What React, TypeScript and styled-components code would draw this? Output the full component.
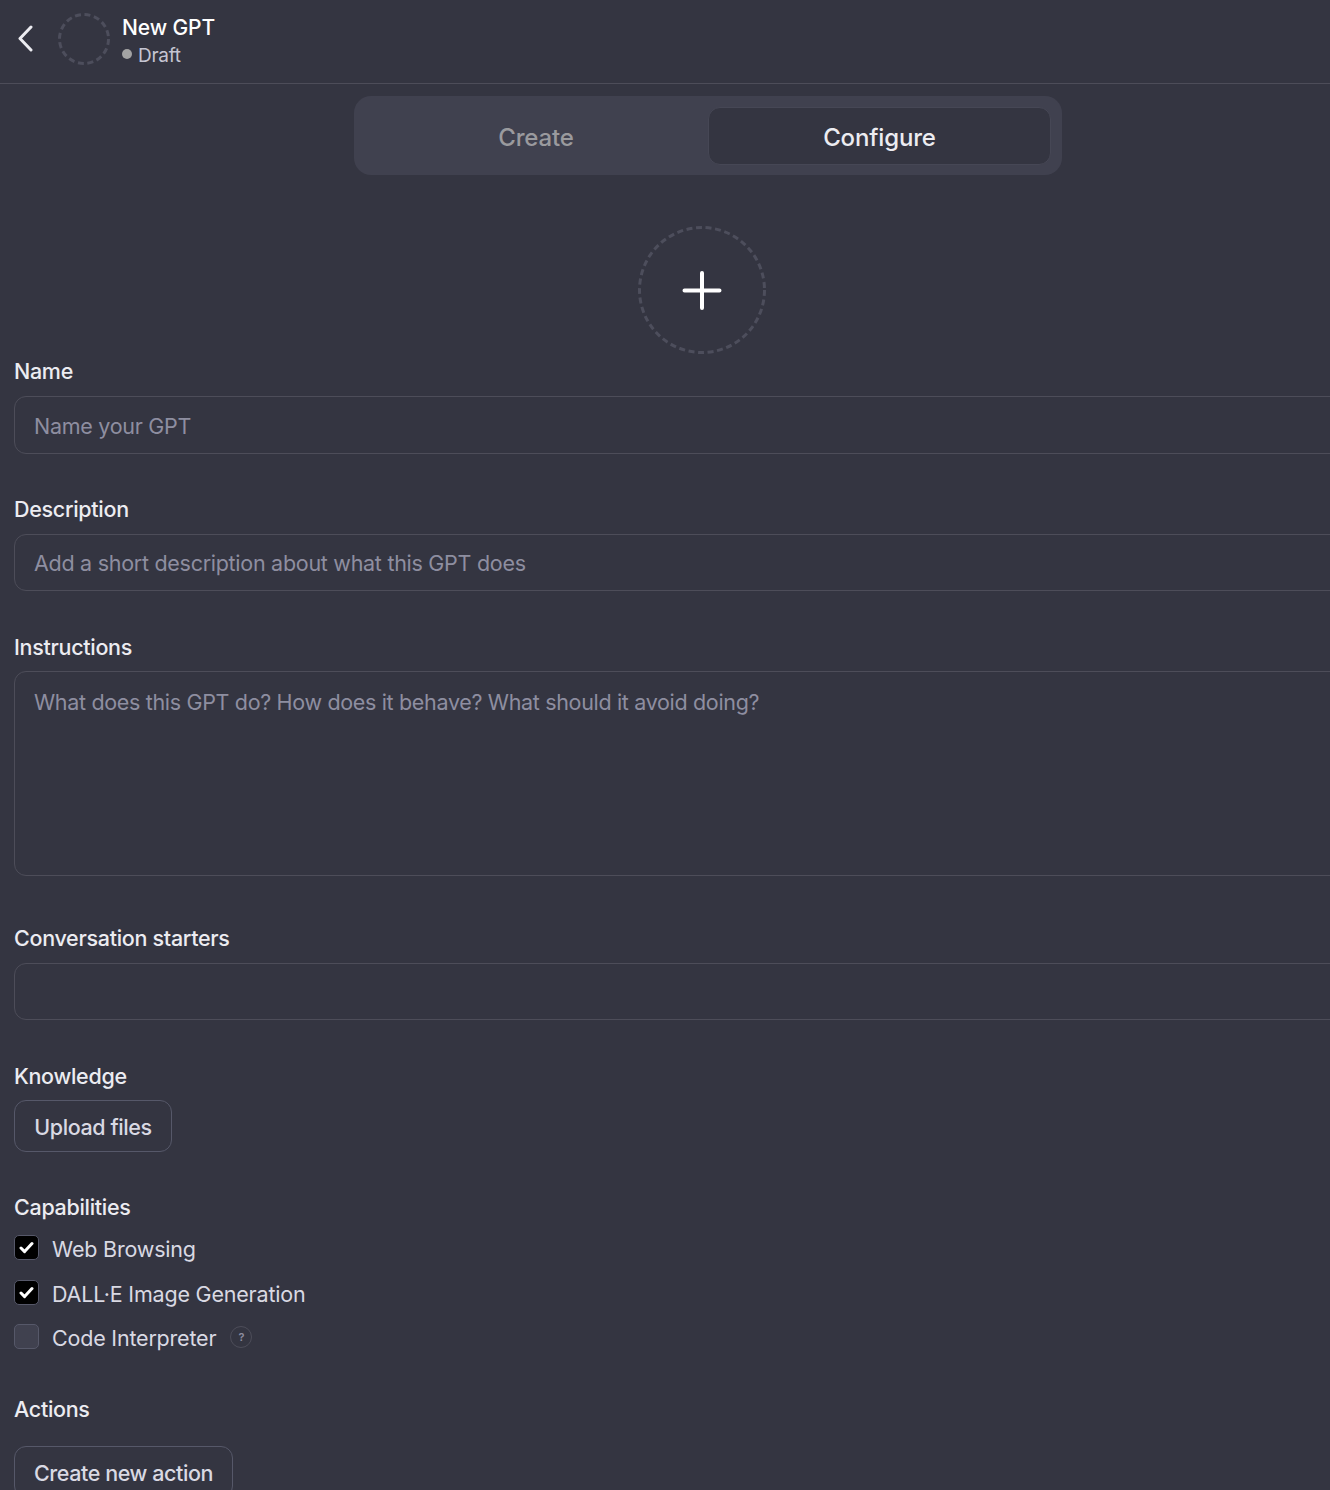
import React from "react";
import styled, { createGlobalStyle } from "styled-components";

const GlobalStyle = createGlobalStyle`
  html, body {
    margin: 0;
    padding: 0;
    width: 1330px;
    height: 1490px;
    overflow: hidden;
    background: #343541;
  }
  * { box-sizing: border-box; }
`;

const Page = styled.div`
  width: 1416px;
  height: 1490px;
  overflow: hidden;
  background: #343541;
  color: #ececf1;
  font-family: Inter, "Liberation Sans", sans-serif;
`;

const Header = styled.header`
  width: 1330px;
  height: 84px;
  display: flex;
  align-items: center;
  padding: 0 0 6px 14px;
  border-bottom: 1px solid #4d4d59;
`;

const BackButton = styled.button`
  width: 24px;
  height: 32px;
  padding: 0;
  margin-right: 20px;
  display: flex;
  align-items: center;
  justify-content: center;
  background: none;
  border: 0;
  color: #ececf1;
`;

const SmallAvatar = styled.svg`
  width: 52px;
  height: 52px;
  margin-right: 12px;
  flex: none;
`;

const HeaderText = styled.div`
  display: flex;
  flex-direction: column;
  margin-top: 6px;
`;

const Title = styled.div`
  font-size: 21px;
  line-height: 28px;
  font-weight: 500;
  letter-spacing: -0.1px;
  color: #fff;
`;

const Status = styled.div`
  display: flex;
  align-items: center;
  gap: 6px;
  font-size: 19px;
  line-height: 28px;
  letter-spacing: -0.3px;
  color: #c5c5d2;
`;

const Dot = styled.span`
  width: 10px;
  height: 10px;
  margin-top: -3px;
  border-radius: 50%;
  background: #a3a3a3;
`;

const Tabs = styled.div`
  width: 708px;
  height: 79px;
  margin: 12px auto 0;
  padding: 11px 11px 10px 0;
  display: grid;
  grid-template-columns: 354px 343px;
  background: #40414f;
  border-radius: 17px;
`;

const Tab = styled.div<{ $active?: boolean }>`
  display: flex;
  align-items: center;
  justify-content: center;
  padding: 2px 0 0 ${(p) => (p.$active ? "0" : "10px")};
  font-size: 24px;
  font-weight: 500;
  letter-spacing: -0.15px;
  color: ${(p) => (p.$active ? "#ececf1" : "#9a9a9e")};
  background: ${(p) => (p.$active ? "#343541" : "transparent")};
  border: ${(p) => (p.$active ? "1px solid #464755" : "0")};
  border-radius: 12px;
`;

const Form = styled.form`
  width: 1376px;
  margin: 0 0 0 14px;
  display: flex;
  flex-direction: column;
`;

const AvatarRow = styled.div`
  display: flex;
  justify-content: center;
  margin-top: 51px;
`;

const BigAvatar = styled.svg`
  width: 128px;
  height: 128px;
`;

const Label = styled.label<{ $top: number }>`
  display: block;
  margin-top: ${(p) => p.$top}px;
  font-size: 21.5px;
  line-height: 26px;
  font-weight: 500;
  letter-spacing: -0.3px;
  color: #ececf1;
`;

const TextInput = styled.input<{ $height: number; $offset?: number }>`
  display: block;
  width: 100%;
  height: ${(p) => p.$height}px;
  margin-top: 12px;
  padding: ${(p) => p.$offset ?? 2}px 19px 0;
  background: transparent;
  border: 1px solid #4d4d59;
  border-radius: 12px;
  outline: none;
  color: #ececf1;
  font-family: inherit;
  font-size: 21.5px;
  letter-spacing: -0.28px;
  &::placeholder {
    color: #8e8ea0;
    opacity: 1;
  }
`;

const TextArea = styled.textarea`
  display: block;
  width: 100%;
  height: 205px;
  margin-top: 11px;
  padding: 16px 19px;
  background: transparent;
  border: 1px solid #4d4d59;
  border-radius: 12px;
  outline: none;
  resize: none;
  color: #ececf1;
  font-family: inherit;
  font-size: 21.5px;
  line-height: 28px;
  letter-spacing: -0.33px;
  &::placeholder {
    color: #8e8ea0;
    opacity: 1;
  }
`;

const OutlineButton = styled.button<{ $top: number; $width: number }>`
  display: block;
  width: ${(p) => p.$width}px;
  height: 52px;
  margin-top: ${(p) => p.$top}px;
  padding: 2px 0 0;
  background: transparent;
  border: 1px solid #565869;
  border-radius: 12px;
  color: #d9d9e3;
  font-family: inherit;
  font-size: 21.5px;
  font-weight: 500;
  letter-spacing: -0.42px;
`;

const CheckList = styled.div`
  display: flex;
  flex-direction: column;
  margin-top: 7px;
`;

const CheckRow = styled.div`
  height: 44.5px;
  display: flex;
  align-items: center;
  gap: 13px;
  font-size: 21.5px;
  letter-spacing: -0.2px;
  color: #d9d9e3;
`;

const CheckBox = styled.span<{ $checked?: boolean }>`
  width: 25px;
  height: 25px;
  flex: none;
  display: flex;
  align-items: center;
  justify-content: center;
  margin-top: -3px;
  border-radius: 5px;
  border: 1px solid #565869;
  background: ${(p) => (p.$checked ? "#000" : "#40414f")};
`;

const Help = styled.span`
  width: 22px;
  height: 22px;
  margin-left: 1px;
  margin-top: -3px;
  display: flex;
  align-items: center;
  justify-content: center;
  border: 1px solid #4d4d59;
  border-radius: 50%;
  font-size: 11px;
  font-weight: 600;
  color: #8e8ea0;
`;

const Check = () => (
  <svg width="15" height="13" viewBox="0 0 15 13" fill="none">
    <path d="M2 7l3.6 3.6L13 2.6" stroke="#fff" strokeWidth="3" strokeLinecap="round" strokeLinejoin="round" />
  </svg>
);

export default function App() {
  return (
    <Page>
      <GlobalStyle />
      <Header>
        <BackButton type="button" aria-label="Back">
          <svg width="18" height="28" viewBox="0 0 18 28" fill="none">
            <path d="M14 2L3 13.500 14 25" stroke="currentColor" strokeWidth="3" strokeLinecap="round" strokeLinejoin="round" />
          </svg>
        </BackButton>
        <SmallAvatar viewBox="0 0 52 52" fill="none">
          <circle cx="26" cy="26" r="24.500" stroke="#4d4e5c" strokeWidth="3" strokeDasharray="6 3.600" />
        </SmallAvatar>
        <HeaderText>
          <Title>New GPT</Title>
          <Status>
            <Dot />
            Draft
          </Status>
        </HeaderText>
      </Header>
      <Tabs>
        <Tab>Create</Tab>
        <Tab $active>Configure</Tab>
      </Tabs>
      <Form>
        <AvatarRow>
          <BigAvatar viewBox="0 0 128 128" fill="none">
            <circle cx="64" cy="64" r="62.500" stroke="#4d4e5c" strokeWidth="3" strokeDasharray="6 3.600" />
            <path d="M64 47v35M46.500 64.500h35" stroke="#fff" strokeWidth="4" strokeLinecap="round" />
          </BigAvatar>
        </AvatarRow>
        <Label $top={4}>Name</Label>
        <TextInput $height={58} placeholder="Name your GPT" />
        <Label $top={42}>Description</Label>
        <TextInput $height={57} $offset={0} placeholder="Add a short description about what this GPT does" />
        <Label $top={43}>Instructions</Label>
        <TextArea placeholder="What does this GPT do? How does it behave? What should it avoid doing?" />
        <Label $top={49}>Conversation starters</Label>
        <TextInput $height={57} />
        <Label $top={43}>Knowledge</Label>
        <OutlineButton type="button" $top={11} $width={158}>Upload files</OutlineButton>
        <Label $top={42}>Capabilities</Label>
        <CheckList>
          <CheckRow>
            <CheckBox $checked><Check /></CheckBox>
            Web Browsing
          </CheckRow>
          <CheckRow>
            <CheckBox $checked><Check /></CheckBox>
            DALL·E Image Generation
          </CheckRow>
          <CheckRow>
            <CheckBox />
            Code Interpreter
            <Help>?</Help>
          </CheckRow>
        </CheckList>
        <Label $top={35}>Actions</Label>
        <OutlineButton type="button" $top={24} $width={219}>Create new action</OutlineButton>
      </Form>
    </Page>
  );
}
